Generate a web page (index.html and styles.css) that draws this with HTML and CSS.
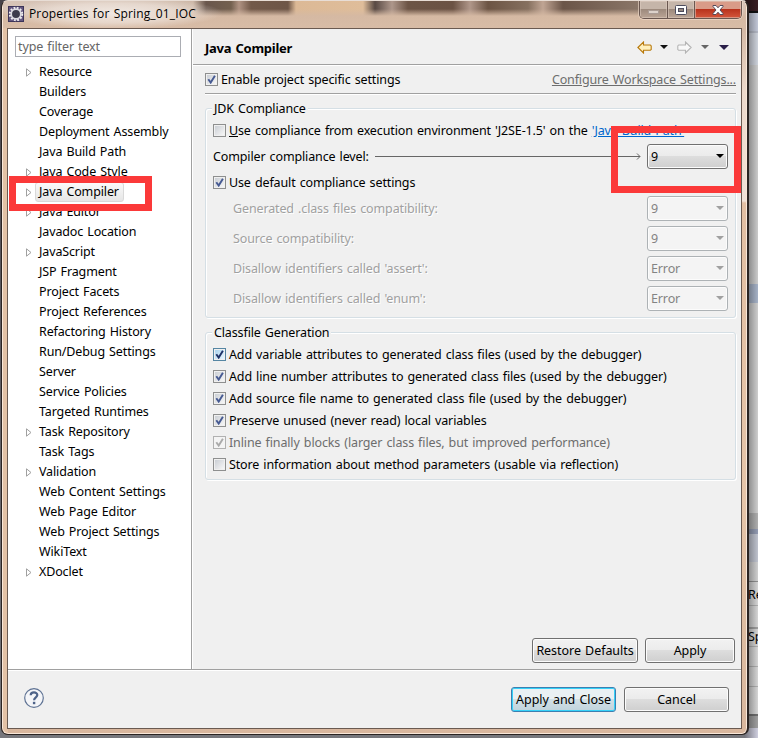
FILE: index.html
```
<!DOCTYPE html>
<html lang="en">
<head>
<meta charset="utf-8">
<title>Properties for Spring_01_IOC</title>
<link rel="stylesheet" href="styles.css">
</head>
<body>
<svg class="defs" width="0" height="0" aria-hidden="true">
  <symbol id="tri" viewBox="0 0 6 9"><path d="M.5 .8V8.2L5 4.5Z" fill="#fff" stroke="#a0a0a0"/></symbol>
  <symbol id="check" viewBox="0 0 9 9"><path d="M1.3 4.2 3.7 7.6 7.9 .8" fill="none" stroke="currentColor" stroke-width="1.9"/></symbol>
  <symbol id="arrow" viewBox="0 0 15 13"><path d="M.9 6.5 6.5 1 V4H13.3L14.2 5V8.5L13.3 9.3H6.5V12Z" stroke-width="1.1"/></symbol>
  <symbol id="down" viewBox="0 0 8 4"><path d="M0 0H8L4 4Z" fill="currentColor"/></symbol>
</svg>
<div class="desk">
  <div class="backdrop"><span class="bd1">Re</span><span class="bd2">Sp</span></div>
  <main class="window">
    <header class="titlebar">
      <svg class="gear" width="16" height="16" viewBox="0 0 16 16"><rect width="16" height="16" fill="#3d3559"/><rect x="1" y="1" width="14" height="14" fill="#655881"/><circle cx="8" cy="8" r="6.2" fill="none" stroke="#eee" stroke-width="2" stroke-dasharray="1.8 1.45"/><circle cx="8" cy="8" r="4.8" fill="#3c3a4c" stroke="#dcdae2" stroke-width="1.7"/></svg>
      <span class="title">Properties for Spring_01_IOC</span>
      <div class="controls">
        <span class="ctl min"><svg width="12" height="5"><rect x=".5" y=".5" width="10" height="3" fill="#ddd2cb" stroke="#aa9c95"/></svg></span>
        <span class="ctl max"><svg width="12" height="10"><rect x=".5" y=".5" width="11" height="9" rx="1" fill="#fff" stroke="#4c4c5d"/><rect x="3.5" y="3.5" width="5" height="3" fill="#968981" stroke="#4c4c5d"/></svg></span>
        <span class="ctl close"><svg width="12" height="10" viewBox="0 0 12 10"><path d="M1 .5H4L6 2.8 8 .5H11V1.5L8 5 11 8.5V9.5H8L6 7.2 4 9.5H1V8.5L4 5 1 1.5Z" fill="#fff" stroke="#554b5b"/></svg></span>
      </div>
    </header>
    <section class="client">
      <div class="upper">
        <nav class="side">
          <div class="filter">type filter text</div>
          <ul class="tree">
            <li><svg><use href="#tri"/></svg><span>Resource</span></li>
            <li><span>Builders</span></li>
            <li><span>Coverage</span></li>
            <li><span>Deployment Assembly</span></li>
            <li><span>Java Build Path</span></li>
            <li><svg><use href="#tri"/></svg><span>Java Code Style</span></li>
            <li class="sel"><svg><use href="#tri"/></svg><span>Java Compiler</span></li>
            <li><svg><use href="#tri"/></svg><span>Java Editor</span></li>
            <li><span>Javadoc Location</span></li>
            <li><svg><use href="#tri"/></svg><span>JavaScript</span></li>
            <li><span>JSP Fragment</span></li>
            <li><span>Project Facets</span></li>
            <li><span>Project References</span></li>
            <li><span>Refactoring History</span></li>
            <li><span>Run/Debug Settings</span></li>
            <li><span>Server</span></li>
            <li><span>Service Policies</span></li>
            <li><span>Targeted Runtimes</span></li>
            <li><svg><use href="#tri"/></svg><span>Task Repository</span></li>
            <li><span>Task Tags</span></li>
            <li><svg><use href="#tri"/></svg><span>Validation</span></li>
            <li><span>Web Content Settings</span></li>
            <li><span>Web Page Editor</span></li>
            <li><span>Web Project Settings</span></li>
            <li><span>WikiText</span></li>
            <li><svg><use href="#tri"/></svg><span>XDoclet</span></li>
          </ul>
        </nav>
        <section class="page">
          <div class="head">
            <h1>Java Compiler</h1>
            <div class="nav">
              <svg class="arr back"><use href="#arrow"/></svg><svg class="dn d1"><use href="#down"/></svg>
              <svg class="arr fwd"><use href="#arrow"/></svg><svg class="dn d2"><use href="#down"/></svg>
              <svg class="dn d3" viewBox="0 0 10 5"><path d="M0 0H10L5 5Z" fill="#291e48"/></svg>
            </div>
          </div>
          <div class="enable">
            <span class="box"><svg><use href="#check"/></svg></span><span class="lbl">Enable project specific settings</span>
            <a class="conf">Configure Workspace Settings...</a>
          </div>
          <fieldset class="group jdk">
            <legend>JDK Compliance</legend>
            <div class="row r1"><span class="box"></span><span class="lbl"><u>U</u>se compliance from execution environment 'J2SE-1.5' on the <a>'Java Build Path'</a></span></div>
            <div class="row r2"><span class="lbl">Compiler compliance level:</span><svg class="line" height="7"><path d="M0 3.5H280" stroke="#666"/></svg><svg class="tip" width="5" height="7"><path d="M1 .5 4 3.5 1 6.5M0 3.5H4" fill="none" stroke="#666"/></svg><span class="combo"><span class="lbl">9</span><svg><use href="#down"/></svg></span></div>
            <div class="row r3"><span class="box"><svg><use href="#check"/></svg></span><span class="lbl">Use default compliance settings</span></div>
            <div class="row sub"><span class="lbl">Generated .class files compatibility:</span><span class="combo off"><span class="lbl">9</span><svg><use href="#down"/></svg></span></div>
            <div class="row sub"><span class="lbl">Source compatibility:</span><span class="combo off"><span class="lbl">9</span><svg><use href="#down"/></svg></span></div>
            <div class="row sub"><span class="lbl">Disallow identifiers called 'assert':</span><span class="combo off"><span class="lbl">Error</span><svg><use href="#down"/></svg></span></div>
            <div class="row sub"><span class="lbl">Disallow identifiers called 'enum':</span><span class="combo off"><span class="lbl">Error</span><svg><use href="#down"/></svg></span></div>
          </fieldset>
          <fieldset class="group cls">
            <legend>Classfile Generation</legend>
            <div class="row"><span class="box hot"><svg><use href="#check"/></svg></span><span class="lbl">Add variable attributes to generated class files (used by the debugger)</span></div>
            <div class="row"><span class="box"><svg><use href="#check"/></svg></span><span class="lbl">Add line number attributes to generated class files (used by the debugger)</span></div>
            <div class="row"><span class="box"><svg><use href="#check"/></svg></span><span class="lbl">Add source file name to generated class file (used by the debugger)</span></div>
            <div class="row"><span class="box"><svg><use href="#check"/></svg></span><span class="lbl">Preserve unused (never read) local variables</span></div>
            <div class="row dis"><span class="box"><svg><use href="#check"/></svg></span><span class="lbl">Inline finally blocks (larger class files, but improved performance)</span></div>
            <div class="row"><span class="box"></span><span class="lbl">Store information about method parameters (usable via reflection)</span></div>
          </fieldset>
          <div class="actions"><button class="w106">Restore Defaults</button><button class="w90">Apply</button></div>
        </section>
      </div>
      <footer class="foot">
        <svg class="help" width="20" height="20" viewBox="0 0 20 20"><circle cx="10" cy="10" r="9.3" fill="#f4f5f8" stroke="#5f7394" stroke-width="1.2"/><path d="M6.7 7.3C6.7 3.5 13.3 3.6 13.3 7.1 13.3 9.4 10.1 9.3 10.1 12.3" fill="none" stroke="#4e6389" stroke-width="2.2"/><rect x="8.9" y="13.8" width="2.4" height="2.4" fill="#4e6389"/></svg>
        <button class="w105 default">Apply and Close</button><button class="w105">Cancel</button>
      </footer>
    </section>
  </main>
  <div class="mark mark-tree"></div>
  <div class="mark mark-level"></div>
</div>
</body>
</html>
```
FILE: styles.css
```
* { box-sizing: border-box; }
body { margin: 0; font: 12.5px/20px "Noto Sans", "Open Sans", sans-serif; letter-spacing: -.13px; word-spacing: 1px; color: #000; }
svg { display: block; flex: none; }
.defs { position: absolute; }
.desk { position: relative; width: 758px; height: 738px; overflow: hidden; padding-left: 1px; background: linear-gradient(#47434a, #77777c); }
.backdrop {
  position: absolute; left: 745px; top: 0; width: 13px; height: 738px; overflow: hidden;
  background: linear-gradient(90deg, #0007, #0001),
    linear-gradient(#3d2025 0 11px, #111 11px 13px, #cfd5e6 13px 31px, #bfc4d1 31px 33px, #dce1eb 33px 65px, #d9d9d9 65px 284px, #b1bed4 284px 303px, #dcdcdc 303px 513px, #bbb 513px 529px, #9ca5bd 529px 534px, #ccd0dc 534px 562px, #dedede 562px 581px, #999 581px 582px, #e4e4e4 582px 605px, #bbb 605px 606px, #e4e4e4 606px 627px, #aaa 627px 629px, #e4e4e4 629px 646px, #bbb 646px 647px, #e4e4e4 647px 666px, #bbb 666px 667px, #e4e4e4 667px 686px, #bbb 686px 687px, #e4e4e4 687px 714px, #777 714px 716px, #aaa 716px 728px, #dde 728px);
}
.backdrop span { position: absolute; left: 3px; }
.bd1 { top: 585px; }
.bd2 { top: 627px; }
.window {
  position: relative; width: 748px; height: 735px; padding: 0 6px 6px 5px; overflow: hidden;
  border: 1px solid #2b2422; border-top-color: #e8ddd5; border-right-width: 2px; border-radius: 7px;
  box-shadow: inset 0 0 0 1px #f9e7d9;
  background: linear-gradient(90deg, #e3c2a6 0 6px, transparent 6px 738px, #fff0 738px), linear-gradient(#d8bda8 0, #d4b9a5 28px, #edd9cb 90px, #f1e2d8 200px, #e2bfa3 202px, #e6c5a9 500px, #dfbea2 600px, #d9b79e);
}
.titlebar {
  display: flex; height: 27px; margin: 0 -4px 0 -4px; padding-left: 5px; position: relative;
  background:
    radial-gradient(ellipse 110px 16px at 110px 12px, #f5eee9e0 0, #eee3dbb0 60%, transparent),
    linear-gradient(180deg, transparent 8px, #d5b9a3 15px, #d8bca6 27px),
    linear-gradient(90deg, #d8c5b8 0, #cdb8a8 190px, #69564c 203px, #73604f 228px, #b09383 236px, #725949 248px, #6e5647 285px, #dcb996 293px, #dfbd9a 360px, #584943 372px, #ae978b 389px, #6c5445 405px, #6b5244 450px, #b0978a 467px, #6c5444 485px, #86705f 525px, #c0a594 540px, #6b5548 560px, #8c786a 640px, #d9c6ba 745px);
}
.gear { margin-top: 5px; }
.title { margin: 3px 0 0 5px; font: 12px/20px "Open Sans", "Noto Sans", sans-serif; letter-spacing: .15px; white-space: nowrap; }
.controls { display: flex; height: 18px; margin: 0 3px 0 auto; border: 1px solid #6a5750; border-top: 0; border-radius: 0 0 5px 5px; box-shadow: 0 0 0 1px #f2ddcf99; overflow: hidden; }
.ctl { display: flex; align-items: center; justify-content: center; background: linear-gradient(#c5b5a9 0 45%, #9d8a7d 50%, #bba596); border-right: 1px solid #6a5750; box-shadow: inset 0 0 0 1px #dfcec188; }
.ctl.min { width: 28px; padding-top: 6px; }
.ctl.max { width: 27px; }
.ctl.close { width: 46px; border: 0; background: linear-gradient(#d99b88 0 45%, #b9331d 50%, #d4573d); }
.client { width: 735px; height: 701px; border: 1px solid #6a5a51; background: #f0f0f0; display: flex; flex-direction: column; }
.upper { display: flex; height: 640px; }
.side { width: 184px; background: #fff; border-right: 1px solid #a0a0a0; padding: 7px 0 0 7px; }
.filter { width: 166px; height: 21px; border: 1px solid #abadb3; padding: 0 2px; line-height: 19px; color: #666; }
.tree { list-style: none; margin: 5px 0 0; padding: 0 0 0 24px; }
.tree li { position: relative; height: 20px; line-height: 20px; white-space: nowrap; }
.tree svg { position: absolute; left: -13px; top: 6px; width: 6px; height: 9px; }
.sel span { display: inline-block; height: 20px; line-height: 18px; margin-left: -4px; padding: 0 4px 0 3px; border: 1px solid #d9d9d9; border-radius: 3px; background: linear-gradient(#fafafa, #e6e6e6); }
.page { flex: 1; padding-left: 12px; border-left: 1px solid #fff; display: flex; flex-direction: column; }
.head { display: flex; justify-content: space-between; height: 37px; margin-left: -12px; padding: 0 12px 0 12px; border-bottom: 1px solid #fff; box-shadow: inset 0 -1px #a0a0a0; }
h1 { margin: 9px 0 0; font: bold 13px/20px "Noto Sans", sans-serif; letter-spacing: -.25px; }
.nav { display: flex; align-items: flex-start; padding-top: 12px; }
.arr { width: 15px; height: 13px; }
.back { fill: #fff0bd; stroke: #b8790c; }
.fwd { fill: #f8f8f8; stroke: #b4b4b4; transform: scaleX(-1); margin-left: 9px; }
.dn { width: 8px; height: 4px; margin-top: 4px; }
.d1 { margin-left: 8px; color: #111; }
.d2 { margin-left: 9px; color: #666; }
.d3 { width: 10px; height: 5px; margin-left: 10px; }
.enable { display: flex; align-items: center; height: 29px; width: 531px; border-bottom: 1px solid #fff; box-shadow: inset 0 -1px #a0a0a0; padding-bottom: 2px; }
.lbl, .conf { padding-top: 2px; }
.conf { margin-left: auto; color: #6d6d6d; text-decoration: underline; letter-spacing: -.15px; }
.box { flex: none; display: block; width: 13px; height: 13px; margin-right: 3px; padding: 1px; border: 1px solid #8e8f8f; background: linear-gradient(135deg, #cbcfd5, #f6f6f6) content-box #f4f4f4; color: #465a92; }
.box svg { width: 9px; height: 9px; }
.hot { border-color: #5586a3; background: linear-gradient(135deg, #acd4ee, #e8f6fe) content-box #def9fa; color: #1f3267; }
.group { position: relative; width: 531px; margin: 0; padding: 0 7px; border: 1px solid #d5dfe5; border-radius: 3px; box-shadow: inset 1px 1px #fff, 1px 1px #fff; }
.group legend { position: absolute; left: 6px; top: -10px; padding: 0 2px; background: #f0f0f0; line-height: 20px; }
.jdk { height: 210px; margin-top: 13px; padding-top: 10px; }
.cls { height: 148px; margin-top: 14px; padding-top: 10px; }
.row { display: flex; align-items: center; height: 22px; white-space: nowrap; }
.row a { color: #0066cc; text-decoration: underline; }
.r2 { height: 30px; }
.r3 { height: 22px; }
.sub { height: 30px; padding-left: 20px; color: #a0a0a0; text-shadow: 1px 1px #fff; }
.line { flex: 1; margin-left: 6px; width: 0; }
.tip { margin-right: 6px; }
.combo { display: flex; align-items: center; justify-content: space-between; width: 81px; height: 25px; margin-left: auto; padding: 0 3px; border: 1px solid #707070; border-radius: 3px; background: linear-gradient(#f2f2f2 0, #ebebeb 49%, #dddddd 50%, #cfcfcf); box-shadow: inset 0 0 0 1px #fcfcfc; }
.r2 .combo { margin-left: 0; }
.combo svg { width: 8px; height: 4px; }
.off { border-color: #adb2b5; background: #f4f4f4; color: #838383; text-shadow: none; }
.off svg { color: #a0a0a0; }
.dis { color: #6d6d6d; }
.dis .box { border-color: #b1b1b1; color: #aaa; background: #f4f4f4; }
.actions { display: flex; gap: 7px; justify-content: flex-end; margin: auto 6px 6px 0; }
button { height: 25px; padding: 0; border: 1px solid #707070; border-radius: 3px; background: linear-gradient(#f2f2f2 0, #ebebeb 49%, #dddddd 50%, #cfcfcf); box-shadow: inset 0 0 0 1px #fcfcfc; font: inherit; letter-spacing: -.05px; word-spacing: 1px; line-height: 22px; white-space: nowrap; color: #000; }
.w106 { width: 106px; }
.w90 { width: 90px; }
.w105 { width: 105px; }
.default { border-color: #3c7fb1; background: linear-gradient(#e9f0f3 0 49%, #d2e0e6 50%, #c0d3dc); box-shadow: inset 0 0 0 1px #35d1f8; }
.foot { display: flex; gap: 8px; flex: 1; padding: 17px 12px 0 16px; border-top: 1px solid #a0a0a0; box-shadow: inset 0 1px #fff; }
.help { margin: 1px auto 0 0; }
.mark { position: absolute; border: 7px solid #fb3939; }
.mark-tree { left: 9px; top: 176px; width: 143px; height: 35px; }
.mark-level { left: 611px; top: 126px; width: 130px; height: 67px; }
```
